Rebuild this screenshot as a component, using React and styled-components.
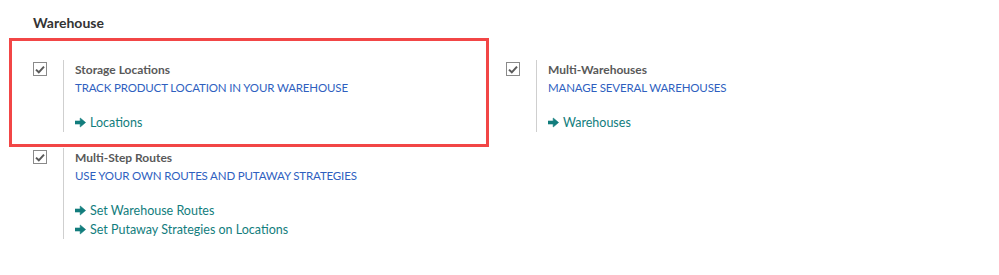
import styled, { createGlobalStyle } from 'styled-components';

const GlobalStyle = createGlobalStyle`
  body {
    margin: 0;
    background: #fff;
    font-family: Lato, 'Liberation Sans', sans-serif;
  }
`;

const Page = styled.div`
  padding: 14px 0 0 16px;
`;

const SectionTitle = styled.h2`
  margin: 0 0 0 17px;
  font-size: 14px;
  font-weight: 700;
  color: #333;
  line-height: 18px;
`;

const SettingsGrid = styled.div`
  display: grid;
  grid-template-columns: 473px 473px;
  row-gap: 16px;
  margin-top: 28px;
`;

const SettingBox = styled.div`
  position: relative;
  display: flex;
  align-items: flex-start;

  ${({ $highlighted }) =>
    $highlighted &&
    `
    &::after {
      content: '';
      position: absolute;
      left: -7px;
      right: 0;
      top: -22px;
      bottom: -15px;
      border: 3px solid #f24646;
      pointer-events: none;
    }
  `}
`;

const CheckArea = styled.div`
  width: 47px;
  padding: 2px 0 0 17px;
  box-sizing: border-box;
  flex-shrink: 0;
`;

const Checkbox = styled.span`
  display: flex;
  align-items: center;
  justify-content: center;
  width: 14px;
  height: 14px;
  border: 1px solid #8a8a8a;
  box-sizing: border-box;
  background: #fff;
`;

const Content = styled.div`
  border-left: 1px solid #cfcfcf;
  padding-left: 11px;
  display: flex;
  flex-direction: column;
`;

const Label = styled.div`
  font-size: 12px;
  font-weight: 700;
  color: #595959;
  line-height: 18px;
  margin-top: 1px;
`;

const Description = styled.div`
  font-size: 11.5px;
  letter-spacing: -0.15px;
  color: #2f5fbf;
  line-height: 18px;
  text-transform: uppercase;
`;

const Links = styled.div`
  margin-top: 16px;
  display: flex;
  flex-direction: column;
`;

const ActionLink = styled.a`
  display: flex;
  align-items: center;
  gap: 4px;
  font-size: 12.5px;
  color: #127d7d;
  line-height: 19px;
  text-decoration: none;
  cursor: pointer;
`;

function CheckIcon() {
  return (
    <svg width="10" height="9" viewBox="0 0 10 9">
      <path d="M1 4.6 L3.8 7.3 L9 1.6" fill="none" stroke="#5a5a5a" strokeWidth="2" />
    </svg>
  );
}

function ArrowIcon() {
  return (
    <svg width="11" height="11" viewBox="0 0 11 11">
      <path
        d="M0 4 H5.2 V1 L10.6 5.5 L5.2 10 V7 H0 Z"
        fill="#127d7d"
        stroke="#127d7d"
        strokeWidth="0.6"
        strokeLinejoin="round"
      />
    </svg>
  );
}

const settings = [
  {
    label: 'Storage Locations',
    description: 'Track product location in your warehouse',
    links: ['Locations'],
    highlighted: true,
  },
  {
    label: 'Multi-Warehouses',
    description: 'Manage several warehouses',
    links: ['Warehouses'],
  },
  {
    label: 'Multi-Step Routes',
    description: 'Use your own routes and putaway strategies',
    links: ['Set Warehouse Routes', 'Set Putaway Strategies on Locations'],
  },
];

export default function App() {
  return (
    <>
      <GlobalStyle />
      <Page>
        <SectionTitle>Warehouse</SectionTitle>
        <SettingsGrid>
          {settings.map((s) => (
            <SettingBox key={s.label} $highlighted={s.highlighted}>
              <CheckArea>
                <Checkbox>
                  <CheckIcon />
                </Checkbox>
              </CheckArea>
              <Content>
                <Label>{s.label}</Label>
                <Description>{s.description}</Description>
                <Links>
                  {s.links.map((l) => (
                    <ActionLink key={l}>
                      <ArrowIcon />
                      {l}
                    </ActionLink>
                  ))}
                </Links>
              </Content>
            </SettingBox>
          ))}
        </SettingsGrid>
      </Page>
    </>
  );
}
